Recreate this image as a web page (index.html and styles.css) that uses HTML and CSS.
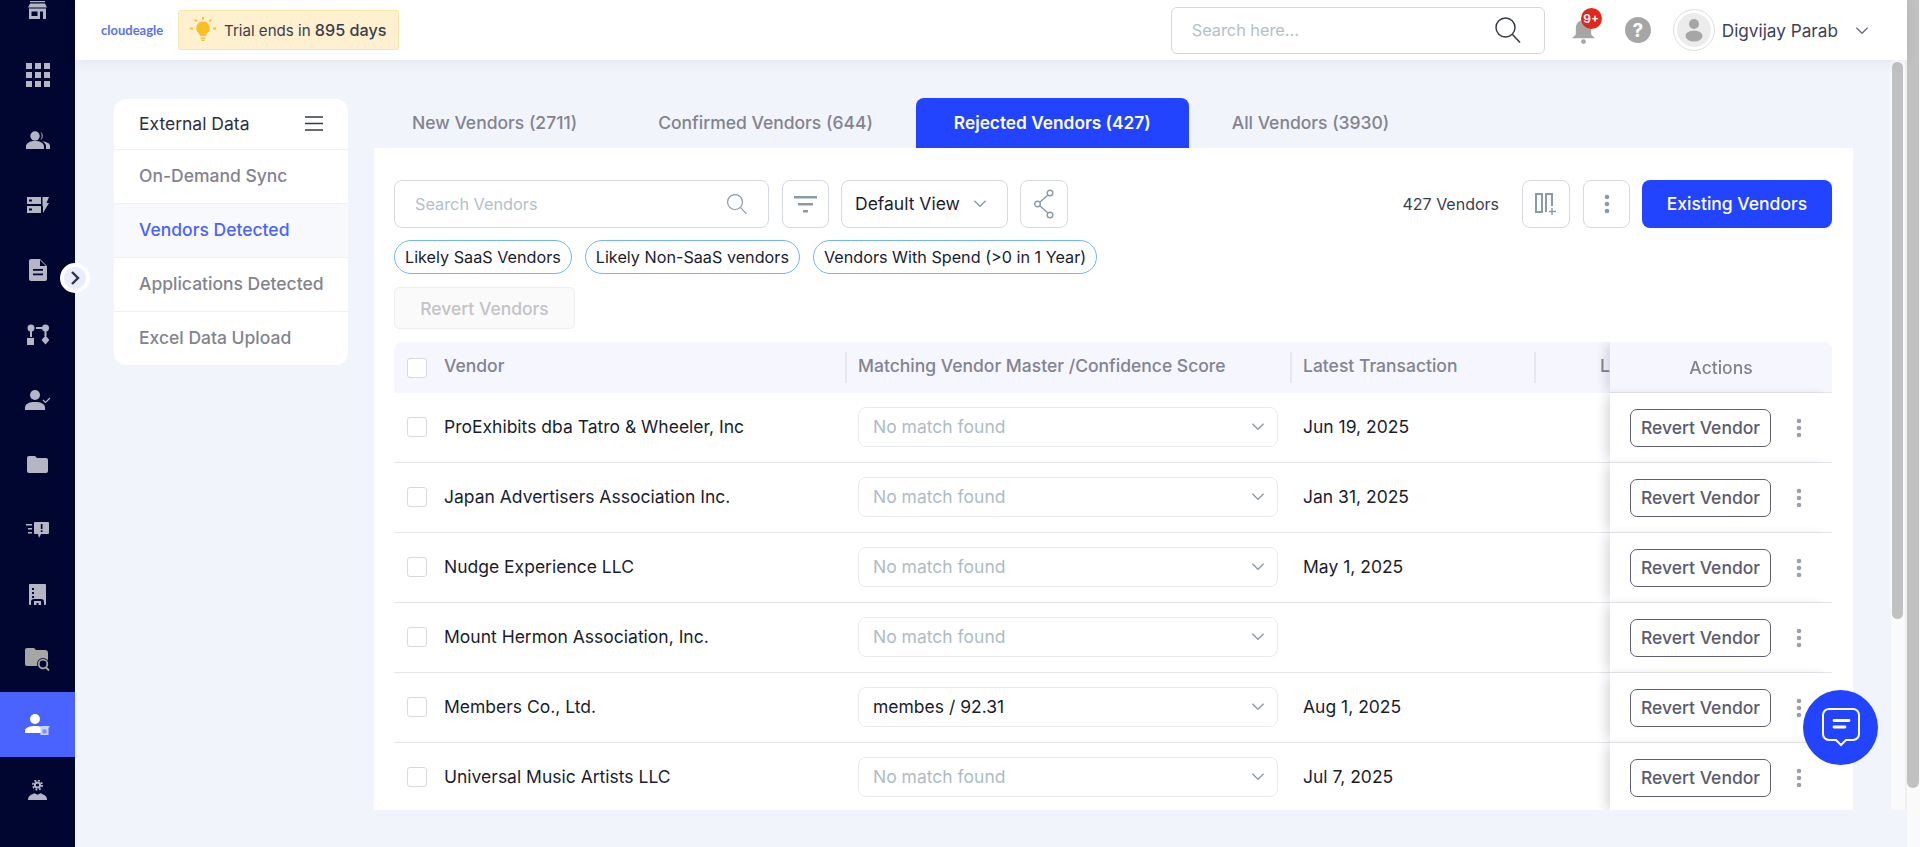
FILE: index.html
```html
<!DOCTYPE html>
<html lang="en">
<head>
  <meta charset="UTF-8" />
  <meta name="viewport" content="width=device-width, initial-scale=1.0" />
  <title>Vendors Detected</title>
  <link rel="stylesheet" href="styles.css">
</head>
<body>
  <svg class="defs" width="0" height="0">
    <symbol id="chev" viewBox="0 0 12 8"><path d="M1 1.5l5 5 5-5" fill="none" stroke="currentColor" stroke-width="1.2"/></symbol>
    <symbol id="kebab" viewBox="0 0 6 20"><circle cx="3" cy="3" r="2.3"/><circle cx="3" cy="10" r="2.3"/><circle cx="3" cy="17" r="2.3"/></symbol>
    <symbol id="lens" viewBox="0 0 28 28"><circle cx="11.5" cy="11.5" r="9.5" fill="none" stroke="currentColor" stroke-width="1.5"/><path d="M18.5 18.5l7.5 8" fill="none" stroke="currentColor" stroke-width="1.5"/></symbol>
  </svg>

  <nav class="sidebar">
    <a class="nav-item"><svg width="19" height="18" viewBox="0 0 19 18" fill="#b4b6c6"><path d="M2 0h15v1.200H2zM2 2.500h15l2 4H0z"/><path d="M1 7.500h17V18h-3v-7.500h-3V18H1zM3.500 10.500v4.500h6v-4.500z" fill-rule="evenodd"/></svg></a>
    <a class="nav-item"><svg width="24" height="24" viewBox="0 0 24 24" fill="#b4b6c6"><path d="M0 0h6v6H0zM9 0h6v6H9zM18 0h6v6h-6zM0 9h6v6H0zM9 9h6v6H9zM18 9h6v6h-6zM0 18h6v6H0zM9 18h6v6H9zM18 18h6v6h-6z"/></svg></a>
    <a class="nav-item"><svg width="24" height="18" viewBox="0 0 24 18" fill="#b4b6c6"><circle cx="9" cy="5" r="4.700"/><path d="M0 18v-2.500C0 12 4 10 9 10s9 2 9 5.500V18zM14 .5a5 5 0 0 1 0 9c2-1 2.600-7-0-9zM16 10.500c4 0 8 1.500 8 4.500v3h-4v-3c0-2-1.500-3.500-4-4.500z"/></svg></a>
    <a class="nav-item"><svg width="22" height="18" viewBox="0 0 22 18" fill="#b4b6c6"><path d="M0 1h14v7H0zM0 10h14v7H0zM15.500 1H22l-2.500 6H22l-6 10V10h-.5z"/><path d="M2 3.500h3v2H2zM2 12.500h3v2H2z" fill="#00062f"/></svg></a>
    <a class="nav-item"><svg width="18" height="22" viewBox="0 0 18 22" fill="#b4b6c6"><path d="M2 0h9l7 7v13a2 2 0 0 1-2 2H2a2 2 0 0 1-2-2V2a2 2 0 0 1 2-2z"/><path d="M4 10h10v1.800H4zM4 14.500h10v1.800H4zM11 1v6h6" fill="#00062f"/></svg></a>
    <a class="nav-item"><svg width="22" height="21" viewBox="0 0 22 21" fill="#b4b6c6"><circle cx="4" cy="4" r="3.500"/><path d="M3 7h2v6H3zM0 14h7v7H0zM9 3h7v2H9z"/><circle cx="18.500" cy="4" r="3.500"/><path d="M17.500 7h2v5h-2zM18.500 11.500l4 4.500-4 4.500-4-4.500z"/></svg></a>
    <a class="nav-item"><svg width="26" height="20" viewBox="0 0 26 20" fill="#b4b6c6"><circle cx="10" cy="5" r="5"/><path d="M0 20v-2.500C0 14 4 12 10 12s10 2 10 5.500V20z"/><path d="M18 10l2.500 2.500L25 8" fill="none" stroke="#b4b6c6" stroke-width="1.200"/></svg></a>
    <a class="nav-item"><svg width="21" height="17" viewBox="0 0 21 17" fill="#b4b6c6"><path d="M2 0h6l2 2h9a2 2 0 0 1 2 2v11a2 2 0 0 1-2 2H2a2 2 0 0 1-2-2V2a2 2 0 0 1 2-2z"/></svg></a>
    <a class="nav-item"><svg width="23" height="16" viewBox="0 0 23 16" fill="#b4b6c6"><path d="M0 2h6v1.500H0zM2 6h4v1.500H2zM2 10h4v1.500H2zM9 0h13a1 1 0 0 1 1 1v10a1 1 0 0 1-1 1h-7l-2 4-1-4H9a1 1 0 0 1-1-1V1a1 1 0 0 1 1-1z"/><path d="M14.800 2h1.700v5h-1.700zM14.800 8.200h1.700V10h-1.700z" fill="#00062f"/></svg></a>
    <a class="nav-item"><svg width="17" height="21" viewBox="0 0 17 21" fill="#b4b6c6"><path d="M1 0h15a1 1 0 0 1 1 1v19a1 1 0 0 1-1 1h-1v-3a3 3 0 0 0-3-3H5a3 3 0 0 0-3 3v3H1a1 1 0 0 1-1-1V1a1 1 0 0 1 1-1z"/><path d="M3 4h2v2H3zM3 8h2v2H3zM3 12h2v2H3z" fill="#00062f"/><path d="M5 17h7v4H9.500v-2h-2v2H5z"/></svg></a>
    <a class="nav-item"><svg width="25" height="23" viewBox="0 0 25 23"><path d="M2 0h7l2 2h9a3 3 0 0 1 3 3v13H2a2 2 0 0 1-2-2V2a2 2 0 0 1 2-2z" fill="#a6a6a6"/><circle cx="18" cy="16" r="6" fill="#00062f"/><circle cx="18" cy="16" r="4.300" fill="none" stroke="#a6a6a6" stroke-width="1.800"/><path d="M21 19.500l3 3" stroke="#a6a6a6" stroke-width="1.800"/></svg></a>
    <a class="nav-item active"><svg width="25" height="21" viewBox="0 0 25 21"><circle cx="10" cy="5" r="5" fill="#fff"/><path d="M0 19v-2c0-3.500 4-5 10-5 2.500 0 4.500.3 6 1v6z" fill="#fff"/><path d="M15.500 12h9v1.500h-9zM15.500 13.500h8V21h-8z" fill="#c9d2fb"/><path d="M17.500 15.500h4v4h-4z" fill="#7c8ff5"/></svg></a>
    <a class="nav-item"><svg width="19" height="20" viewBox="0 0 19 20" fill="#b4b6c6"><circle cx="9.500" cy="5" r="3.600"/><circle cx="9.500" cy="5" r="4.600" fill="none" stroke="#b4b6c6" stroke-width="1.800" stroke-dasharray="1.900 1.700"/><circle cx="9.500" cy="5" r="1.600" fill="#00062f"/><path d="M0 20c0-1 0-3 2-4.500 1.500-1 3.500-1.800 4.500-2.200l3 1.500 3-1.500c1 .4 3 1.200 4.500 2.200 2 1.500 2 3.500 2 4.500z"/></svg></a>
  </nav>

  <button class="collapse-btn"><svg width="12" height="16" viewBox="0 0 12 16"><path d="M3 2l6 6-6 6" fill="none" stroke="#2f3350" stroke-width="2.400"/></svg></button>

  <div class="main">
    <header class="topbar">
      <div class="logo">cloudeagle</div>
      <div class="trial">
        <svg width="26" height="26" viewBox="0 0 26 26"><path d="M13 4.500a6.700 6.700 0 0 1 4.500 11.600c-1 1-1.500 2-1.500 3H10c0-1-.5-2-1.500-3A6.700 6.700 0 0 1 13 4.500zM10.500 20.200h5v1.500h-5zM11.500 22.500h3v1.500h-3z" fill="#fbbf24"/><path d="M13 0v2.500M5 2.500l1.600 2M21 2.500l-1.600 2M0 11.500h3M23 11.500h3" stroke="#fbbf24" stroke-width="2"/></svg>
        <span>Trial ends in <b>895 days</b></span>
      </div>
      <div class="top-search">
        <span>Search here...</span>
        <svg class="top-lens" width="28" height="28"><use href="#lens"/></svg>
      </div>
      <div class="bell">
        <svg width="25" height="24" viewBox="0 0 26 25" fill="#a6a6a6"><path d="M13 0c5 0 8 4 8 9v6l4 4H1l4-4V9c0-5 3-9 8-9z"/><circle cx="13" cy="22.500" r="2.500"/></svg>
        <span class="badge">9+</span>
      </div>
      <div class="help">?</div>
      <div class="avatar"><svg width="20" height="24" viewBox="0 0 20 24" fill="#a6a6a6"><circle cx="10" cy="6" r="5"/><ellipse cx="10" cy="18" rx="8.500" ry="5.500"/></svg></div>
      <div class="user-name">Digvijay Parab</div>
      <svg class="user-chev" width="14" height="9"><use href="#chev"/></svg>
    </header>

    <div class="page">
      <div class="content">
        <aside class="side-card">
          <div class="side-head">
            <span>External Data</span>
            <svg width="18" height="15" viewBox="0 0 18 15"><path d="M0 1h18M0 7.500h18M0 14h18" stroke="#353a50" stroke-width="1.600"/></svg>
          </div>
          <div class="side-item">On-Demand Sync</div>
          <div class="side-item current">Vendors Detected</div>
          <div class="side-item">Applications Detected</div>
          <div class="side-item">Excel Data Upload</div>
        </aside>

        <section class="panel">
          <div class="tabs">
            <button>New Vendors (2711)</button>
            <button>Confirmed Vendors (644)</button>
            <button class="active">Rejected Vendors (427)</button>
            <button>All Vendors (3930)</button>
          </div>

          <div class="card">
            <div class="toolbar">
              <div class="vendor-search">
                <span>Search Vendors</span>
                <svg width="22" height="22" class="search-lens"><use href="#lens"/></svg>
              </div>
              <button class="icon-btn filter-btn"><svg width="23" height="17" viewBox="0 0 23 17" fill="#8b9ba5"><path d="M0 0h23v2.500H0zM4 7h15v2.500H4zM9 14h5v2.500H9z"/></svg></button>
              <button class="view-btn">Default View <svg width="14" height="9"><use href="#chev"/></svg></button>
              <button class="icon-btn share-btn"><svg width="20" height="30" viewBox="0 0 20 30" fill="none" stroke="#8b9ba5" stroke-width="1.400"><circle cx="3.500" cy="15" r="2.800"/><circle cx="16" cy="4" r="2.800"/><circle cx="16" cy="26" r="2.800"/><path d="M6 13l8-7M6 17l8 7"/></svg></button>
              <div class="count">427 Vendors</div>
              <button class="icon-btn cols-btn"><svg width="22" height="22" viewBox="0 0 22 22" fill="none" stroke="#8b9ba5" stroke-width="2"><path d="M1 1h6v18H1zM11 19V1h6v12"/><path d="M17 15v7M14 18.500h7" stroke-width="1.400"/></svg></button>
              <button class="icon-btn more-btn"><svg width="6" height="20"><use href="#kebab"/></svg></button>
              <button class="primary-btn">Existing Vendors</button>
            </div>

            <div class="chips">
              <span class="chip">Likely SaaS Vendors</span>
              <span class="chip">Likely Non-SaaS vendors</span>
              <span class="chip">Vendors With Spend (&gt;0 in 1 Year)</span>
            </div>

            <button class="revert-all">Revert Vendors</button>

            <div class="table-wrap">
              <table>
                <thead>
                  <tr>
                    <th class="col-vendor"><div class="cell-vendor"><span class="check"></span><span class="th-label">Vendor</span></div></th>
                    <th class="col-match"><div class="th-sep"><span class="th-label">Matching Vendor Master /Confidence Score</span></div></th>
                    <th class="col-date"><div class="th-sep"><span class="th-label">Latest Transaction</span></div></th>
                    <th class="col-next"><div class="th-sep th-next"><span class="th-label">L</span></div></th>
                    <th class="col-actions">Actions</th>
                  </tr>
                </thead>
                <tbody>
                  <tr>
                    <td><div class="cell-vendor"><span class="check"></span>ProExhibits dba Tatro &amp; Wheeler, Inc</div></td>
                    <td><div class="select empty">No match found <svg width="14" height="9"><use href="#chev"/></svg></div></td>
                    <td class="date">Jun 19, 2025</td>
                    <td></td>
                    <td class="col-actions"><div class="act"><button class="revert-btn">Revert Vendor</button><svg class="row-kebab" width="6" height="20"><use href="#kebab"/></svg></div></td>
                  </tr>
                  <tr>
                    <td><div class="cell-vendor"><span class="check"></span>Japan Advertisers Association Inc.</div></td>
                    <td><div class="select empty">No match found <svg width="14" height="9"><use href="#chev"/></svg></div></td>
                    <td class="date">Jan 31, 2025</td>
                    <td></td>
                    <td class="col-actions"><div class="act"><button class="revert-btn">Revert Vendor</button><svg class="row-kebab" width="6" height="20"><use href="#kebab"/></svg></div></td>
                  </tr>
                  <tr>
                    <td><div class="cell-vendor"><span class="check"></span>Nudge Experience LLC</div></td>
                    <td><div class="select empty">No match found <svg width="14" height="9"><use href="#chev"/></svg></div></td>
                    <td class="date">May 1, 2025</td>
                    <td></td>
                    <td class="col-actions"><div class="act"><button class="revert-btn">Revert Vendor</button><svg class="row-kebab" width="6" height="20"><use href="#kebab"/></svg></div></td>
                  </tr>
                  <tr>
                    <td><div class="cell-vendor"><span class="check"></span>Mount Hermon Association, Inc.</div></td>
                    <td><div class="select empty">No match found <svg width="14" height="9"><use href="#chev"/></svg></div></td>
                    <td class="date"></td>
                    <td></td>
                    <td class="col-actions"><div class="act"><button class="revert-btn">Revert Vendor</button><svg class="row-kebab" width="6" height="20"><use href="#kebab"/></svg></div></td>
                  </tr>
                  <tr>
                    <td><div class="cell-vendor"><span class="check"></span>Members Co., Ltd.</div></td>
                    <td><div class="select">membes / 92.31 <svg width="14" height="9"><use href="#chev"/></svg></div></td>
                    <td class="date">Aug 1, 2025</td>
                    <td></td>
                    <td class="col-actions"><div class="act"><button class="revert-btn">Revert Vendor</button><svg class="row-kebab" width="6" height="20"><use href="#kebab"/></svg></div></td>
                  </tr>
                  <tr>
                    <td><div class="cell-vendor"><span class="check"></span>Universal Music Artists LLC</div></td>
                    <td><div class="select empty">No match found <svg width="14" height="9"><use href="#chev"/></svg></div></td>
                    <td class="date">Jul 7, 2025</td>
                    <td></td>
                    <td class="col-actions"><div class="act"><button class="revert-btn">Revert Vendor</button><svg class="row-kebab" width="6" height="20"><use href="#kebab"/></svg></div></td>
                  </tr>
                </tbody>
              </table>
            </div>
          </div>
        </section>
      </div>
      <div class="inner-scroll"><div class="thumb"></div></div>
    </div>
  </div>

  <div class="outer-scroll"><div class="thumb"></div></div>

  <button class="chat-btn"><svg width="40" height="42" viewBox="0 0 40 42" fill="none" stroke="#fff" stroke-width="2"><path d="M8 2h24a6 6 0 0 1 6 6v19a6 6 0 0 1-6 6h-7l-5 5-5-5H8a6 6 0 0 1-6-6V8a6 6 0 0 1 6-6z"/><path d="M13 13.500h15M13 20h11" stroke-width="2.800" stroke-linecap="round"/></svg></button>
</body>
</html>
```

FILE: styles.css
```css
* {
  box-sizing: border-box;
}
html, body {
  height: 100%;
}
body {
  margin: 0;
  font-family: Inter, "Liberation Sans", sans-serif;
  font-size: 17.5px;
  color: #1b1d2e;
  background-color: #f1f4fa;
  display: flex;
  overflow: hidden;
}
button {
  font-family: inherit;
  font-size: 17.5px;
  cursor: pointer;
}
.defs {
  position: absolute;
}

/* left nav */
.sidebar {
  width: 75px;
  flex-shrink: 0;
  background-color: #00062f;
  display: flex;
  flex-direction: column;
  overflow: hidden;
}
.nav-item {
  height: 65px;
  flex-shrink: 0;
  display: flex;
  align-items: center;
  justify-content: center;
}
.nav-item:first-child {
  margin-top: -23px;
}
.nav-item.active {
  background-color: #4a63ff;
}
.collapse-btn {
  position: absolute;
  left: 60px;
  top: 263px;
  width: 30px;
  height: 30px;
  padding: 0;
  border: 4px solid #fff;
  border-radius: 50%;
  background-color: #e9ecfb;
  display: flex;
  align-items: center;
  justify-content: center;
  z-index: 5;
}

/* top bar */
.main {
  flex: 1;
  min-width: 0;
  display: flex;
  flex-direction: column;
}
.topbar {
  height: 60px;
  flex-shrink: 0;
  background-color: #fff;
  box-shadow: 0 2px 12px rgba(30, 40, 80, 0.07);
  display: flex;
  align-items: center;
  padding-left: 26px;
  position: relative;
  z-index: 2;
}
.logo {
  width: 77px;
  font-family: Lato, sans-serif;
  font-weight: 700;
  font-size: 13px;
  color: #5a73ee;
}
.trial {
  width: 221px;
  height: 40px;
  background-color: #fff0cf;
  border: 1px solid #fbe3ac;
  border-radius: 3px;
  display: flex;
  align-items: center;
  gap: 8px;
  padding-left: 11px;
  font-size: 15.100px;
  color: #3a3d4e;
  white-space: nowrap;
}
.trial b {
  font-weight: 500;
  font-size: 16.200px;
}
.top-search {
  width: 374px;
  height: 47px;
  margin-left: auto;
  border: 1px solid #d3d7e2;
  border-radius: 6px;
  display: flex;
  align-items: center;
  justify-content: space-between;
  padding: 0 22px 0 20px;
  font-size: 16.300px;
  color: #b3c0c8;
}
.top-lens {
  color: #353a45;
}
.bell {
  position: relative;
  width: 26px;
  height: 24px;
  margin-left: 26px;
  margin-top: 4px;
}
.badge {
  position: absolute;
  left: 10px;
  top: -12px;
  width: 21px;
  height: 21px;
  border-radius: 50%;
  background-color: #e0291c;
  color: #fff;
  font-size: 12px;
  font-weight: 600;
  display: flex;
  align-items: center;
  justify-content: center;
}
.help {
  width: 26px;
  height: 26px;
  margin-left: 28px;
  border-radius: 50%;
  background-color: #a6a6a6;
  color: #fff;
  font-weight: 700;
  font-size: 19px;
  display: flex;
  align-items: center;
  justify-content: center;
}
.avatar {
  width: 42px;
  height: 42px;
  margin-left: 22px;
  border-radius: 50%;
  background-color: #ececec;
  border: 1px solid #e2e2e2;
  box-shadow: inset 0 0 0 3px #fff;
  display: flex;
  align-items: center;
  justify-content: center;
}
.user-name {
  margin-left: 7px;
  color: #3f4256;
  font-size: 17.200px;
}
.user-chev {
  margin: 0 38px 0 17px;
  color: #6c7080;
}

/* page body */
.page {
  height: 750px;
  flex-shrink: 0;
  display: flex;
}
.content {
  flex: 1;
  min-width: 0;
  display: flex;
  align-items: flex-start;
  gap: 26px;
  padding: 38px 38px 0 39px;
  height: 100%;
}
.side-card {
  width: 234px;
  flex-shrink: 0;
  margin-top: 1px;
  background-color: #fff;
  border-radius: 12px;
  overflow: hidden;
}
.side-head {
  height: 51px;
  padding: 0 25px 2px;
  display: flex;
  align-items: center;
  justify-content: space-between;
  color: #2d3040;
  border-bottom: 1px solid #f0f1f5;
}
.side-item {
  height: 54px;
  padding: 0 0 3px 25px;
  display: flex;
  align-items: center;
  font-weight: 500;
  color: #83838f;
  border-bottom: 1px solid #f0f1f5;
}
.side-item:last-child {
  height: 53px;
  border-bottom: none;
}
.side-item.current {
  background-color: #f8f9fc;
  color: #4a63ff;
}

.panel {
  flex: 1;
  min-width: 0;
  height: 100%;
  display: flex;
  flex-direction: column;
}
.tabs {
  display: flex;
  gap: 5px;
  height: 50px;
  flex-shrink: 0;
}
.tabs button {
  padding: 0 38px 2px;
  border: none;
  border-radius: 8px 8px 0 0;
  background: none;
  color: #83838f;
  font-weight: 500;
}
.tabs button.active {
  background-color: #2344ff;
  color: #fff;
  font-weight: 600;
  font-size: 17.300px;
}
.card {
  flex: 1;
  min-height: 0;
  background-color: #fff;
  padding: 32px 21px 0 20px;
  display: flex;
  flex-direction: column;
}
.toolbar {
  display: flex;
  align-items: center;
  height: 48px;
  flex-shrink: 0;
}
.vendor-search {
  width: 375px;
  height: 48px;
  border: 1px solid #d6d8e4;
  border-radius: 8px;
  display: flex;
  align-items: center;
  justify-content: space-between;
  padding: 0 20px;
  font-size: 16.300px;
  color: #b3c0c8;
}
.search-lens {
  color: #8b9ba5;
}
.icon-btn {
  height: 48px;
  padding: 0;
  background-color: #fff;
  border: 1px solid #d6d8e4;
  border-radius: 8px;
  display: flex;
  align-items: center;
  justify-content: center;
}
.filter-btn {
  width: 47px;
  margin-left: 13px;
}
.view-btn {
  width: 167px;
  height: 48px;
  margin-left: 12px;
  padding: 0 0 2px 13px;
  background-color: #fff;
  border: 1px solid #d6d8e4;
  border-radius: 8px;
  color: #1b1d2e;
  display: flex;
  align-items: center;
  gap: 13px;
  white-space: nowrap;
}
.view-btn svg {
  color: #8b9ba5;
}
.share-btn {
  width: 48px;
  margin-left: 12px;
}
.count {
  margin-left: auto;
  font-size: 16px;
  color: #3a3d4e;
}
.cols-btn {
  width: 48px;
  margin-left: 23px;
}
.more-btn {
  width: 47px;
  margin-left: 13px;
  fill: #8b9ba5;
}
.primary-btn {
  width: 190px;
  height: 48px;
  margin-left: 12px;
  padding: 0 0 2px;
  border: none;
  border-radius: 8px;
  background-color: #2344ff;
  color: #fff;
  font-weight: 500;
}
.chips {
  display: flex;
  gap: 13px;
  margin-top: 12px;
  flex-shrink: 0;
}
.chip {
  height: 34px;
  padding: 0 10px;
  border: 1px solid #74b6f5;
  border-radius: 17px;
  display: flex;
  align-items: center;
  font-size: 16.200px;
}
.revert-all {
  width: 181px;
  height: 42px;
  margin-top: 13px;
  flex-shrink: 0;
  border: 1px solid #eeeeee;
  border-radius: 6px;
  background-color: #fafafa;
  color: #c2c2c8;
  font-weight: 500;
}

/* vendors table */
.table-wrap {
  flex: 1;
  min-height: 0;
  margin-top: 13px;
  overflow: hidden;
  border-radius: 8px 8px 0 0;
}
table {
  width: 1664px;
  table-layout: fixed;
  border-collapse: separate;
  border-spacing: 0;
}
.col-vendor {
  width: 451px;
}
.col-match {
  width: 445px;
}
.col-date {
  width: 244px;
}
.col-next {
  width: 302px;
}
th {
  height: 51px;
  padding: 0;
  background-color: #f5f6fe;
  color: #83838f;
  font-weight: 500;
  text-align: left;
}
.th-label {
  margin-bottom: 5px;
}
td {
  height: 70px;
  padding: 0;
  border-bottom: 1px solid #e6e7eb;
}
.cell-vendor {
  display: flex;
  align-items: center;
  gap: 17px;
  padding-left: 13px;
}
td .cell-vendor, td .select {
  margin-bottom: 2px;
}
.check {
  width: 20px;
  height: 20px;
  flex-shrink: 0;
  background-color: #fff;
  border: 1px solid #d8d9df;
  border-radius: 3px;
}
.th-sep {
  height: 31px;
  border-left: 2px solid #e6e8f0;
  padding-left: 11px;
  display: flex;
  align-items: center;
}
.th-next {
  padding-left: 64px;
}
.select {
  width: 420px;
  height: 40px;
  margin-left: 13px;
  padding: 0 12px 0 14px;
  border: 1px solid #e8eaee;
  border-radius: 8px;
  display: flex;
  align-items: center;
  justify-content: space-between;
}
.select.empty {
  color: #aebcc4;
}
.select svg {
  color: #8b9ba5;
}
.date {
  padding: 0 0 2px 13px;
}
.col-actions {
  width: 222px;
  position: sticky;
  right: 0;
  background-color: #fff;
  box-shadow: -7px 0 10px -3px rgba(30, 30, 60, 0.16);
}
th.col-actions {
  background-color: #f5f6fe;
  text-align: center;
  border-bottom: 1px solid #e6e7eb;
}
.act {
  display: flex;
  align-items: center;
  padding-left: 20px;
  gap: 25px;
}
.revert-btn {
  width: 141px;
  height: 38px;
  padding: 0;
  background-color: #fff;
  border: 1px solid #5e6072;
  border-radius: 7px;
  color: #5a5c6e;
  font-weight: 500;
}
.row-kebab {
  fill: #9a9fa8;
}

/* fake scrollbars */
.inner-scroll {
  width: 16px;
  flex-shrink: 0;
  background-color: #fafafa;
  border-right: 2px solid #f0f0f0;
  padding: 2px 2px 0 1px;
}
.inner-scroll .thumb {
  height: 557px;
  background-color: #c1c1c1;
  border-radius: 6px;
}
.outer-scroll {
  width: 13px;
  flex-shrink: 0;
  background-color: #fafafa;
  padding-right: 1px;
}
.outer-scroll .thumb {
  height: 788px;
  background-color: #c1c1c1;
  border-radius: 0 0 6px 6px;
}

.chat-btn {
  position: absolute;
  left: 1803px;
  top: 690px;
  width: 75px;
  height: 75px;
  padding: 0;
  border: none;
  border-radius: 50%;
  background-color: #2344ff;
  display: flex;
  align-items: center;
  justify-content: center;
  z-index: 6;
}
```
